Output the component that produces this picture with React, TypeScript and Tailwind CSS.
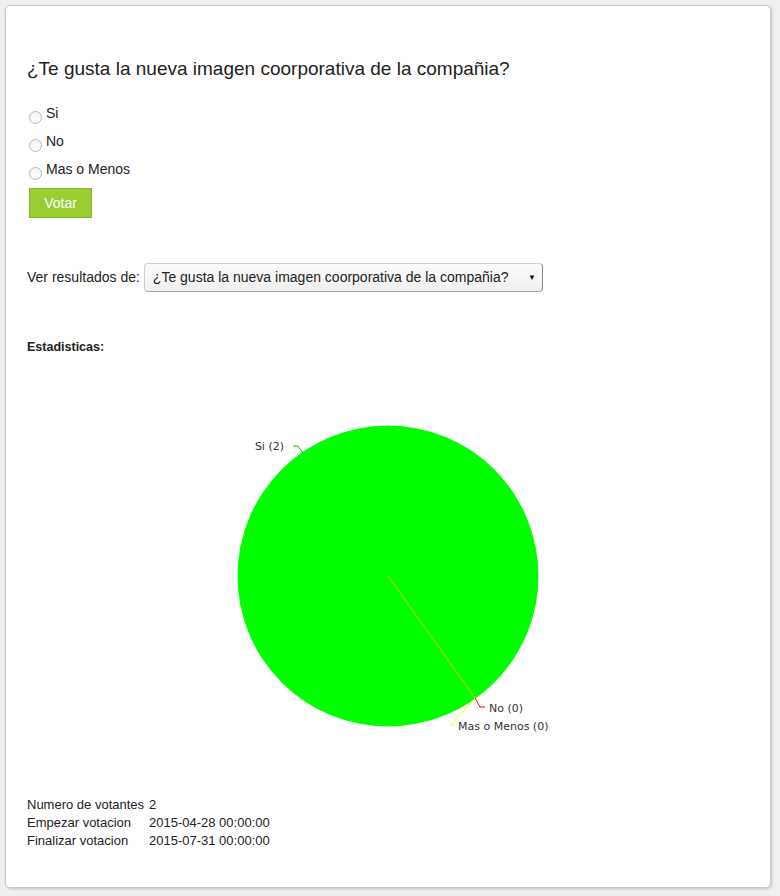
const font = { fontFamily: '"Liberation Sans", Arial, sans-serif' };

function Radio({ label }: { label: string }) {
  return (
    <label className="flex h-[28px] items-center text-[14px] text-[#222]">
      <span className="mt-[6px] ml-[2px] mr-[4px] inline-block h-[13px] w-[13px] rounded-full border border-[#b8b8b8] bg-gradient-to-b from-[#f4f4f4] to-white" />
      <span className="-mt-[1px]">{label}</span>
    </label>
  );
}

function Pie() {
  return (
    <svg width="716" height="442" className="block" style={{ fontFamily: '"DejaVu Sans", Verdana, sans-serif' }}>
      <circle cx="361" cy="222" r="150.5" fill="#00ff00" />
      <line x1="361" y1="222" x2="448" y2="344" stroke="#f2b705" strokeWidth="1" />
      <polyline points="266,92 271,92 276,99" fill="none" stroke="#00c800" strokeWidth="1" />
      <polyline points="448,344 453,353 458,353" fill="none" stroke="#ff0000" strokeWidth="1" />
      <polyline points="448,344 424,371 427,371" fill="none" stroke="#ffff00" strokeWidth="1" />
      <text x="257" y="96" textAnchor="end" fontSize="11" fill="#333">Si (2)</text>
      <text x="462" y="358" fontSize="11" fill="#333">No (0)</text>
      <text x="431" y="376" fontSize="11" fill="#333">Mas o Menos (0)</text>
    </svg>
  );
}

export default function App() {
  return (
    <div className="h-[896px] w-[780px] bg-[#efefef] pt-[5px] pl-[5px]" style={font}>
      <div className="h-[883px] w-[766px] rounded-[5px] border border-[#c8c8c8] bg-white pl-[21px] pt-[51px] shadow-[1px_1px_3px_rgba(0,0,0,0.18)]">
        <h1 className="h-[24px] text-[19px] leading-[24px] text-[#222]">
          ¿Te gusta la nueva imagen coorporativa de la compañia?
        </h1>
        <div className="mt-[19px]">
          <Radio label="Si" />
          <Radio label="No" />
          <Radio label="Mas o Menos" />
        </div>
        <button className="ml-[2px] mt-[4px] h-[30px] w-[63px] border border-[#88b82a] bg-[#9acd32] text-[14px] text-white">
          Votar
        </button>
        <div className="mt-[45px] flex items-center text-[14px] text-[#222]">
          <span>Ver resultados de:</span>
          <div className="ml-[4px] flex h-[29px] w-[399px] items-center rounded-[4px] border border-[#cfcfcf] border-r-[#8a8a8a] border-b-[#a8a8a8] bg-gradient-to-b from-[#fbfbfb] to-[#f0f0f0] pl-[8px]">
            <span className="flex-1 whitespace-nowrap">¿Te gusta la nueva imagen coorporativa de la compañia?</span>
            <span className="w-[20px] text-center text-[8px] leading-none text-[#111]">▼</span>
          </div>
        </div>
        <div className="mt-[48px] h-[14px] text-[12.5px] font-bold leading-[14px] text-[#222]">Estadisticas:</div>
        <Pie />
        <table className="text-[13px] leading-[18px] text-[#222]">
          <tbody>
            <tr>
              <td className="w-[122px] p-0">Numero de votantes</td>
              <td className="p-0">2</td>
            </tr>
            <tr>
              <td className="p-0">Empezar votacion</td>
              <td className="p-0">2015-04-28 00:00:00</td>
            </tr>
            <tr>
              <td className="p-0">Finalizar votacion</td>
              <td className="p-0">2015-07-31 00:00:00</td>
            </tr>
          </tbody>
        </table>
      </div>
    </div>
  );
}
